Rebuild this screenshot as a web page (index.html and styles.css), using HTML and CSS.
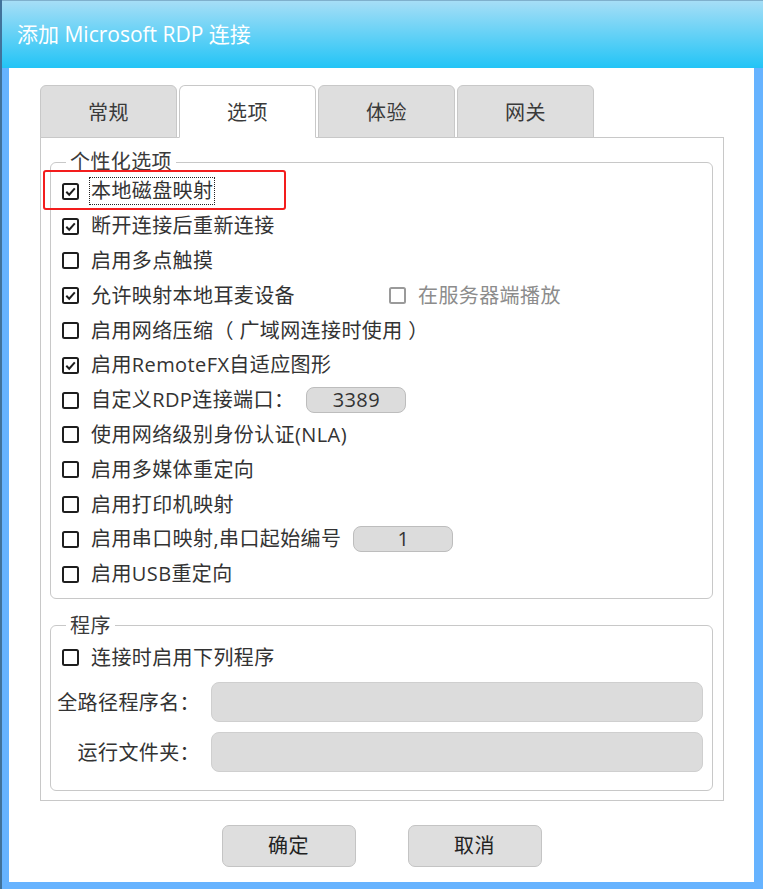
FILE: index.html
```html
<!DOCTYPE html>
<html>
<head>
    <meta charset="utf-8">
    <title>添加 Microsoft RDP 连接</title>
    <link rel="stylesheet" href="styles.css">
</head>
<body>
<div class="window">
    <div class="titlebar">添加 Microsoft RDP 连接</div>
    <div class="frame">
        <div class="client">
            <div class="tabs">
                <div class="tab">常规</div>
                <div class="tab active">选项</div>
                <div class="tab">体验</div>
                <div class="tab">网关</div>
            </div>
            <div class="panel">
                <fieldset class="group">
                    <legend>个性化选项</legend>
                    <div class="row">
                        <svg class="cb" viewBox="0 0 17 17"><rect x="1" y="1" width="15" height="15" rx="1.5"/><path d="M4.3 8.8l2.9 2.9L12.8 5.4"/></svg>
                        <span class="focus">本地磁盘映射</span>
                        <div class="highlight"></div>
                    </div>
                    <div class="row">
                        <svg class="cb" viewBox="0 0 17 17"><rect x="1" y="1" width="15" height="15" rx="1.5"/><path d="M4.3 8.8l2.9 2.9L12.8 5.4"/></svg>
                        <span>断开连接后重新连接</span>
                    </div>
                    <div class="row">
                        <svg class="cb" viewBox="0 0 17 17"><rect x="1" y="1" width="15" height="15" rx="1.5"/></svg>
                        <span>启用多点触摸</span>
                    </div>
                    <div class="row">
                        <svg class="cb" viewBox="0 0 17 17"><rect x="1" y="1" width="15" height="15" rx="1.5"/><path d="M4.3 8.8l2.9 2.9L12.8 5.4"/></svg>
                        <span class="wide">允许映射本地耳麦设备</span>
                        <svg class="cb off" viewBox="0 0 17 17"><rect x="1" y="1" width="15" height="15" rx="1.5"/></svg>
                        <span class="muted">在服务器端播放</span>
                    </div>
                    <div class="row">
                        <svg class="cb" viewBox="0 0 17 17"><rect x="1" y="1" width="15" height="15" rx="1.5"/></svg>
                        <span>启用网络压缩（ 广域网连接时使用 ）</span>
                    </div>
                    <div class="row">
                        <svg class="cb" viewBox="0 0 17 17"><rect x="1" y="1" width="15" height="15" rx="1.5"/><path d="M4.3 8.8l2.9 2.9L12.8 5.4"/></svg>
                        <span>启用RemoteFX自适应图形</span>
                    </div>
                    <div class="row">
                        <svg class="cb" viewBox="0 0 17 17"><rect x="1" y="1" width="15" height="15" rx="1.5"/></svg>
                        <span>自定义RDP连接端口：</span>
                        <div class="num">3389</div>
                    </div>
                    <div class="row">
                        <svg class="cb" viewBox="0 0 17 17"><rect x="1" y="1" width="15" height="15" rx="1.5"/></svg>
                        <span>使用网络级别身份认证(NLA)</span>
                    </div>
                    <div class="row">
                        <svg class="cb" viewBox="0 0 17 17"><rect x="1" y="1" width="15" height="15" rx="1.5"/></svg>
                        <span>启用多媒体重定向</span>
                    </div>
                    <div class="row">
                        <svg class="cb" viewBox="0 0 17 17"><rect x="1" y="1" width="15" height="15" rx="1.5"/></svg>
                        <span>启用打印机映射</span>
                    </div>
                    <div class="row">
                        <svg class="cb" viewBox="0 0 17 17"><rect x="1" y="1" width="15" height="15" rx="1.5"/></svg>
                        <span>启用串口映射,串口起始编号</span>
                        <div class="num">1</div>
                    </div>
                    <div class="row">
                        <svg class="cb" viewBox="0 0 17 17"><rect x="1" y="1" width="15" height="15" rx="1.5"/></svg>
                        <span>启用USB重定向</span>
                    </div>
                </fieldset>

                <fieldset class="group program">
                    <legend>程序</legend>
                    <div class="row">
                        <svg class="cb" viewBox="0 0 17 17"><rect x="1" y="1" width="15" height="15" rx="1.5"/></svg>
                        <span>连接时启用下列程序</span>
                    </div>
                    <div class="field">
                        <label>全路径程序名：</label>
                        <div class="text-input"></div>
                    </div>
                    <div class="field">
                        <label>运行文件夹：</label>
                        <div class="text-input"></div>
                    </div>
                </fieldset>
            </div>
            <div class="buttons">
                <div class="btn">确定</div>
                <div class="btn">取消</div>
            </div>
        </div>
    </div>
</div>
</body>
</html>
```

FILE: styles.css
```css
body {
    margin: 0;
    font-family: "Open Sans", "Noto Sans CJK SC", sans-serif;
    color: #333;
    letter-spacing: 0.4px;
}

.window {
    width: 763px;
    height: 889px;
    box-sizing: border-box;
    background: #66b3ff;
    border-left: 2px solid #41729a;
}

.titlebar {
    height: 68px;
    box-sizing: border-box;
    border-top: 1px solid #7fb0cc;
    background: linear-gradient(#a6def6, #22c4f6);
    color: #fff;
    font-size: 21px;
    letter-spacing: 0;
    line-height: 66px;
    padding-left: 15px;
}

.frame {
    padding: 0 9px 7px 7px;
}

.client {
    height: 814px;
    box-sizing: border-box;
    background: #fff;
    padding: 17px 0 0 31px;
}

/* tabs */
.tabs {
    display: flex;
    gap: 2px;
}

.tab {
    width: 137px;
    height: 53px;
    box-sizing: border-box;
    border: 1px solid #c8c8c8;
    border-radius: 6px 6px 0 0;
    background: #dedede;
    text-align: center;
    font-size: 20px;
    line-height: 54px;
    color: #3a3a3a;
}

.tab.active {
    background: #fff;
    border-bottom-color: #fff;
}

.panel {
    width: 684px;
    height: 664px;
    box-sizing: border-box;
    margin-top: -1px;
    border: 1px solid #c8c8c8;
    padding: 12px 10px 0 9px;
}

/* groups */
.group {
    margin: 0;
    padding: 0 0 6px 0;
    border: 1px solid #c8c8c8;
    border-radius: 6px;
    min-width: 0;
}

.group legend {
    margin-left: 15px;
    padding: 0 4px;
    font-size: 20px;
    line-height: 24px;
    color: #3a3a3a;
}

.group.program {
    margin-top: 15px;
    padding: 2px 0 18px 0;
}

.row {
    position: relative;
    display: flex;
    align-items: center;
    height: 34.8px;
    padding-left: 11px;
    font-size: 20px;
    line-height: 24px;
    white-space: nowrap;
}

.program .row {
    height: 36px;
}

.cb {
    width: 17px;
    height: 17px;
    margin-right: 12px;
    flex: none;
    fill: none;
    stroke: #1e1e1e;
    stroke-width: 2;
}

.cb.off {
    stroke: #9a9a9a;
}

.wide {
    width: 298px;
}

.muted {
    color: #8c8c8c;
}

.focus {
    outline: 1px dotted #222;
    outline-offset: 1px;
}

.highlight {
    position: absolute;
    left: -8px;
    top: -4px;
    width: 239px;
    height: 36px;
    border: 2px solid #f31d1d;
    border-radius: 3px;
}

.num {
    width: 100px;
    height: 26px;
    box-sizing: border-box;
    margin-left: 12px;
    border: 1px solid #bdbdbd;
    border-radius: 8px;
    background: #dcdcdc;
    text-align: center;
    font-size: 20px;
    line-height: 24px;
}

.field {
    display: flex;
    align-items: center;
    margin-top: 6px;
    font-size: 20px;
}

.field + .field {
    margin-top: 10px;
}

.field label {
    width: 149px;
    text-align: right;
    margin-right: 11px;
}

.text-input {
    width: 492px;
    height: 40px;
    box-sizing: border-box;
    border: 1px solid #cfcfcf;
    border-radius: 8px;
    background: #dcdcdc;
}

/* bottom buttons */
.buttons {
    display: flex;
    justify-content: center;
    gap: 52px;
    margin: 24px 0 0 -31px;
}

.btn {
    width: 134px;
    height: 42px;
    box-sizing: border-box;
    border: 1px solid #c4c4c4;
    border-radius: 7px;
    background: #dedede;
    text-align: center;
    font-size: 20px;
    line-height: 40px;
    color: #222;
}
```
